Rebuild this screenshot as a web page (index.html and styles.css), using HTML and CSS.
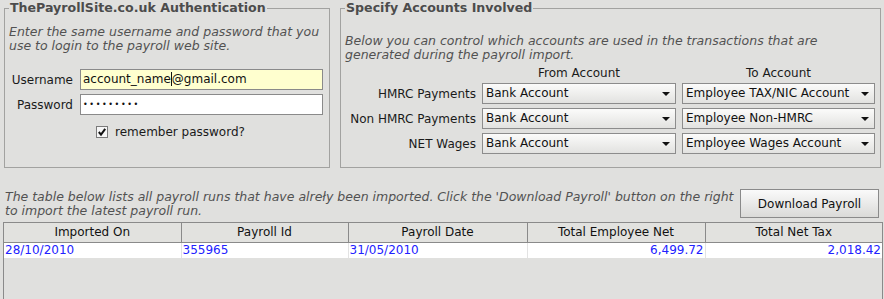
FILE: index.html
```html
<!DOCTYPE html>
<html lang="en">
  <head>
    <meta charset="UTF-8" />
    <title>Payroll Import</title>
    <link rel="stylesheet" href="styles.css">
  </head>
  <body>
    <div class="top">
      <fieldset class="group auth">
        <legend>ThePayrollSite.co.uk Authentication</legend>
        <p class="hint">Enter the same username and password that you<br>use to login to the payroll web site.</p>
        <div class="form-row">
          <label>Username</label>
          <div class="field active">account_name<span class="caret"></span>@gmail.com</div>
        </div>
        <div class="form-row">
          <label>Password</label>
          <div class="field"><span class="dots">&bull;&bull;&bull;&bull;&bull;&bull;&bull;&bull;&bull;</span></div>
        </div>
        <div class="remember">
          <span class="check">
            <svg width="10" height="10" viewBox="0 0 10 10"><path d="M1.8 5 L4 7.6 L8.2 1.8" fill="none" stroke="#111" stroke-width="2"/></svg>
          </span>
          remember password?
        </div>
      </fieldset>

      <fieldset class="group accounts">
        <legend>Specify Accounts Involved</legend>
        <p class="hint">Below you can control which accounts are used in the transactions that are<br>generated during the payroll import.</p>
        <div class="account-grid">
          <span></span>
          <span class="col-head">From Account</span>
          <span class="col-head">To Account</span>

          <span class="row-label">HMRC Payments</span>
          <div class="combo">Bank Account</div>
          <div class="combo">Employee TAX/NIC Account</div>

          <span class="row-label">Non HMRC Payments</span>
          <div class="combo">Bank Account</div>
          <div class="combo">Employee Non-HMRC</div>

          <span class="row-label">NET Wages</span>
          <div class="combo">Bank Account</div>
          <div class="combo">Employee Wages Account</div>
        </div>
      </fieldset>
    </div>

    <div class="imports">
      <p class="hint">The table below lists all payroll runs that have alre&#x0142;y been imported. Click the 'Download Payroll' button on the right<br>to import the latest payroll run.</p>
      <button class="btn">Download Payroll</button>
    </div>

    <div class="table-wrap">
      <table class="runs">
        <colgroup>
          <col style="width:177px">
          <col style="width:167px">
          <col style="width:179px">
          <col style="width:178px">
          <col style="width:177px">
        </colgroup>
        <thead>
          <tr>
            <th>Imported On</th>
            <th>Payroll Id</th>
            <th>Payroll Date</th>
            <th>Total Employee Net</th>
            <th>Total Net Tax</th>
          </tr>
        </thead>
        <tbody>
          <tr>
            <td>28/10/2010</td>
            <td>355965</td>
            <td>31/05/2010</td>
            <td class="num">6,499.72</td>
            <td class="num">2,018.42</td>
          </tr>
        </tbody>
      </table>
    </div>
  </body>
</html>
```

FILE: styles.css
```css
body {
  font-family: 'DejaVu Sans', sans-serif;
  font-size: 12px;
  line-height: 14px;
  color: #1a1a1a;
  background-color: #e0e0de;
  margin: 0;
  padding: 0;
  height: 299px;
  overflow: hidden;
}
.top {
  display: flex;
  gap: 10px;
  padding: 1px 3px 0 4px;
}
.group {
  margin: 0;
  padding: 0 4px;
  border: 1px solid #a2a2a0;
  height: 167px;
  box-sizing: border-box;
}
.group legend {
  padding: 0 1px;
  font-weight: bold;
  font-size: 12.6px;
  color: #4c4c4c;
  line-height: 14px;
}
.auth {
  width: 326px;
}
.accounts {
  width: 541px;
}
.hint {
  font-style: italic;
  font-size: 12.5px;
  color: #525252;
  margin: 0;
  white-space: nowrap;
}
.auth .hint {
  margin-top: 10px;
}
.accounts .hint {
  margin-top: 19px;
}
.imports .hint {
  margin-top: 2px;
}
.form-row {
  display: flex;
  align-items: center;
  margin-top: 4px;
}
.auth .hint + .form-row {
  margin-top: 16px;
}
.form-row label {
  width: 64px;
  margin-right: 7px;
  text-align: right;
}
.field {
  width: 243px;
  height: 21px;
  box-sizing: border-box;
  border: 1px solid #8a8a8a;
  background: white;
  padding: 0 2px;
  line-height: 19px;
  color: #111;
}
.field.active {
  background: #ffffcf;
}
.caret {
  display: inline-block;
  width: 1px;
  height: 14px;
  background: #111;
  vertical-align: -3px;
}
.dots {
  font-size: 8px;
  letter-spacing: 1.6px;
  position: relative;
  top: -1px;
}
.remember {
  display: flex;
  align-items: center;
  gap: 7px;
  margin: 10px 0 0 87px;
}
.check {
  width: 12px;
  height: 12px;
  box-sizing: border-box;
  border: 1px solid #7a7a7a;
  background: #f6f6f6;
  display: flex;
  align-items: center;
  justify-content: center;
}
.account-grid {
  display: grid;
  grid-template-columns: 131px 194px 193px;
  column-gap: 6px;
  row-gap: 4px;
  align-items: center;
  margin-top: 4px;
}
.col-head {
  text-align: center;
  margin-bottom: -1px;
}
.row-label {
  text-align: right;
}
.combo {
  position: relative;
  height: 21px;
  box-sizing: border-box;
  border: 1px solid #8c8c8c;
  background: linear-gradient(#fbfbfa, #e2e2e0);
  padding: 0 3px;
  line-height: 19px;
  color: #111;
}
.combo::after {
  content: '';
  position: absolute;
  right: 5px;
  top: 8px;
  border-left: 4px solid transparent;
  border-right: 4px solid transparent;
  border-top: 4px solid #111;
}
.imports {
  display: flex;
  justify-content: space-between;
  align-items: flex-start;
  padding: 20px 5px 0 5px;
}
.btn {
  margin-top: 1px;
  width: 139px;
  height: 29px;
  border: 1px solid #8a8a8a;
  background: linear-gradient(#fafafa, #dadad8);
  font-family: 'DejaVu Sans', sans-serif;
  font-size: 12px;
  color: #111;
  padding: 0;
}
.table-wrap {
  margin: 4px 1px 0 3px;
  height: 90px;
  border: 1px solid #8a8a8a;
  border-bottom: none;
}
.runs {
  border-collapse: collapse;
  table-layout: fixed;
  width: 878px;
}
.runs th {
  height: 19px;
  padding: 0;
  box-sizing: border-box;
  font-weight: normal;
  color: #111;
  background: #e2e2df;
  border-right: 1px solid #8a8a8a;
  border-bottom: 1px solid #8a8a8a;
  line-height: 14px;
}
.runs td {
  height: 15px;
  padding: 0 1px;
  background: white;
  color: #2222ff;
  border-right: 1px solid #e3e3e3;
  line-height: 15px;
  white-space: nowrap;
}
.runs th:last-child,
.runs td:last-child {
  border-right: none;
}
.num {
  text-align: right;
}
```
